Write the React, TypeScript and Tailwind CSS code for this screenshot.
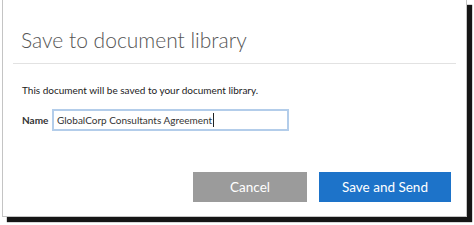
import React from "react";

export default function App() {
  return (
    <div className="w-[474px] h-[225px] bg-white overflow-hidden" style={{ fontFamily: 'Lato, "Open Sans", sans-serif' }}>
      <div className="ml-[2px] w-[465px] h-[217px] bg-white border-l border-r border-b border-[#c4c4c4] shadow-[5px_5px_1px_#151515] flex flex-col">
        <div className="pl-[18px] pt-[26px] h-[63px] text-[21px] font-light leading-[28px] text-[#555]">
          Save to document library
        </div>
        <div className="ml-[10px] mr-[10px] h-px bg-[#e2e2e2]" />
        <div className="pl-[19px] pt-[20px] text-[10px] leading-[13px] text-[#222]">
          This document will be saved to your document library.
        </div>
        <div className="flex items-center pl-[19px] mt-[12px]">
          <span className="text-[10px] font-bold text-[#333] w-[30px]">Name</span>
          <div className="w-[237px] h-[22px] border-2 border-[#b3cdea] flex items-center pl-[3px] text-[10px] text-[#333]">
            GlobalCorp Consultants Agreement<span className="w-px h-[14px] bg-[#222] ml-[1px]" />
          </div>
        </div>
        <div className="flex justify-end gap-[12px] pr-[15px] mt-[41px]">
          <div className="w-[114px] h-[30px] bg-[#9b9b9b] text-white text-[13.5px] flex items-center justify-center">Cancel</div>
          <div className="w-[132px] h-[30px] bg-[#1d73c9] text-white text-[13.5px] flex items-center justify-center">Save and Send</div>
        </div>
      </div>
    </div>
  );
}
